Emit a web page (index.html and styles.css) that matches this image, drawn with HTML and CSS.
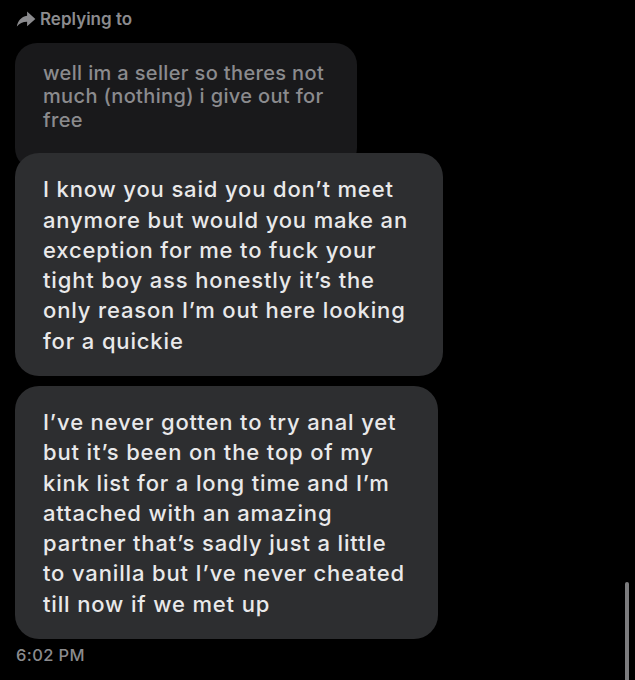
FILE: index.html
```html
<!DOCTYPE html>
<html lang="en">
<head>
    <meta charset="UTF-8">
    <title>Messages</title>
    <link rel="stylesheet" href="styles.css">
</head>
<body>
    <div class="thread">
        <div class="reply-label">
            <svg class="reply-icon" viewBox="0 0 24 24" width="22" height="22">
                <path d="M13.2 3.8v4.6C6.5 9.4 3 14.4 2 20.2c2.7-3.6 6.4-5.2 11.2-5.2v4.9L22.2 12z" fill="currentColor"/>
            </svg>
            <span>Replying to</span>
        </div>

        <div class="bubble quoted">
            well im a seller so theres not<br>
            much (nothing) i give out for<br>
            free
        </div>

        <div class="bubble">
            I know you said you don’t meet<br>
            anymore but would you make an<br>
            exception for me to fuck your<br>
            tight boy ass honestly it’s the<br>
            only reason I’m out here looking<br>
            for a quickie
        </div>

        <div class="bubble">
            I’ve never gotten to try anal yet<br>
            but it’s been on the top of my<br>
            kink list for a long time and I’m<br>
            attached with an amazing<br>
            partner that’s sadly just a little<br>
            to vanilla but I’ve never cheated<br>
            till now if we met up
        </div>

        <div class="timestamp">6:02 PM</div>
    </div>

    <div class="scrollbar"></div>
</body>
</html>
```

FILE: styles.css
```css
:root {
    --bg-color: #000000;
    --bubble-bg: #2d2e30;
    --quoted-bg: #19191b;
    --muted: #8b8b8e;
    --text: #e9e9ea;
}

html, body {
    margin: 0;
    height: 100%;
}

body {
    background: var(--bg-color);
    font-family: Inter, 'Noto Sans', sans-serif;
    color: var(--text);
    overflow: hidden;
    position: relative;
}

.thread {
    padding: 7px 0 0 15px;
    display: flex;
    flex-direction: column;
    align-items: flex-start;
}

.reply-label {
    display: flex;
    align-items: center;
    gap: 3px;
    color: var(--muted);
    font-size: 17px;
    font-weight: 600;
    height: 24px;
}

.reply-icon {
    display: block;
}

.bubble {
    background: var(--bubble-bg);
    border-radius: 24px;
    padding: 21px 35px 20px 28px;
    font-size: 22px;
    font-weight: 500;
    line-height: 30.3px;
    letter-spacing: 0.85px;
    position: relative;
}

.bubble + .bubble {
    margin-top: 10px;
    padding-right: 33px;
}

.quoted {
    background: var(--quoted-bg);
    color: var(--muted);
    font-size: 20px;
    line-height: 23.4px;
    letter-spacing: 0.35px;
    padding: 19px 33px 38px 28px;
    margin-top: 12px;
    margin-bottom: -17px;
    border-radius: 22px;
}

.quoted + .bubble {
    margin-top: 0;
    padding-right: 35px;
}

.timestamp {
    color: var(--muted);
    font-size: 16.5px;
    font-weight: 500;
    letter-spacing: 0.4px;
    margin: 6px 0 0 1px;
}

/* thin overlay scroll indicator */
.scrollbar {
    position: absolute;
    right: 6px;
    top: 582px;
    width: 4px;
    height: 110px;
    border-radius: 2px;
    background: #7c7c7e;
}
```
